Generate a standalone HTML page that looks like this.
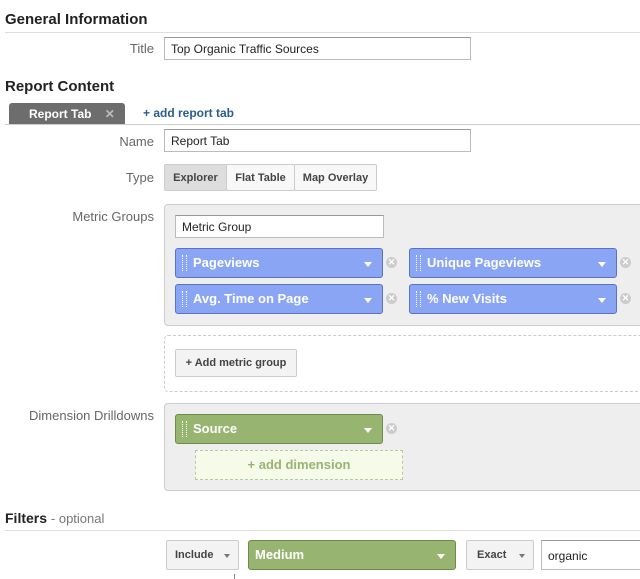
<!DOCTYPE html><html><head><style>
body{margin:0;width:640px;height:579px;overflow:hidden;background:#fff;font-family:"Liberation Sans",sans-serif;position:relative}
.a{position:absolute;box-sizing:border-box}
.h{font-weight:bold;font-size:15px;color:#222}
.lbl{font-size:13px;color:#666;text-align:right;width:150px;left:4px}
.inp{border:1px solid #bbb;background:#fff;font-size:12px;color:#222;padding:4px 6px;border-top-color:#999}
.pill{background:#8aa5f4;border:1px solid #5b73c4;border-radius:3px;color:#fff;font-weight:bold;font-size:13px;padding:6px 0 0 17px}
.pill.g{background:#98b471;border-color:#6f8a4d}
.pill:before{content:"";position:absolute;left:6px;top:6px;width:3px;height:16px;border-left:1px dotted #fff;border-right:1px dotted #fff}
.pill.nd:before{display:none}
.pill:after{content:"";position:absolute;right:10px;top:13px;border:4px solid transparent;border-top:5px solid #fff;border-bottom:0}
.x{width:11px;height:11px;border-radius:50%;background:#ccc;color:#fff;font-size:9px;line-height:11px;text-align:center;font-weight:bold}
.btn{border:1px solid #ccc;background:#f3f3f3;font-size:11px;font-weight:bold;color:#444;text-align:center;border-radius:2px}
.dd:after{content:"";position:absolute;right:8px;top:13px;border:3.5px solid transparent;border-top:4px solid #777;border-bottom:0}
</style></head><body>
<div class="a h" style="left:5px;top:11px">General Information</div>
<div class="a" style="left:5px;top:32px;width:635px;height:1px;background:#ddd"></div>
<div class="a lbl" style="top:41px">Title</div>
<div class="a inp" style="left:164px;top:37px;width:307px;height:23px">Top Organic Traffic Sources</div>
<div class="a h" style="left:5px;top:78px">Report Content</div>
<div class="a" style="left:9px;top:103px;width:116px;height:21px;background:#6d6d6d;border-radius:3px 3px 0 0;color:#fff;font-size:12px;font-weight:bold;padding:4px 0 0 20px">Report Tab <span style="color:#bbb;margin-left:10px">✕</span></div>
<div class="a" style="left:143px;top:106px;font-size:12px;font-weight:bold;color:#2a5d8c">+ add report tab</div>
<div class="a" style="left:5px;top:124px;width:635px;height:1px;background:#ccc"></div>
<div class="a lbl" style="top:134px">Name</div>
<div class="a inp" style="left:164px;top:129px;width:307px;height:23px">Report Tab</div>
<div class="a lbl" style="top:170px">Type</div>
<div class="a btn" style="left:164px;top:164px;width:63px;height:27px;line-height:27px;background:#ddd">Explorer</div>
<div class="a btn" style="left:226px;top:164px;width:69px;height:27px;line-height:27px;background:#f8f8f8">Flat Table</div>
<div class="a btn" style="left:294px;top:164px;width:83px;height:27px;line-height:27px;background:#f8f8f8">Map Overlay</div>
<div class="a lbl" style="top:209px">Metric Groups</div>
<div class="a" style="left:164px;top:204px;width:480px;height:122px;background:#eee;border:1px solid #ccc;border-radius:4px"></div>
<div class="a inp" style="left:175px;top:215px;width:209px;height:23px">Metric Group</div>
<div class="a pill" style="left:175px;top:248px;width:208px;height:30px">Pageviews</div>
<div class="a x" style="left:386px;top:257px">✕</div>
<div class="a pill" style="left:409px;top:248px;width:208px;height:30px">Unique Pageviews</div>
<div class="a x" style="left:620px;top:257px">✕</div>
<div class="a pill" style="left:175px;top:284px;width:208px;height:30px">Avg. Time on Page</div>
<div class="a x" style="left:386px;top:293px">✕</div>
<div class="a pill" style="left:409px;top:284px;width:208px;height:30px">% New Visits</div>
<div class="a x" style="left:620px;top:293px">✕</div>
<div class="a" style="left:164px;top:335px;width:480px;height:57px;border:1px dashed #ccc;border-radius:4px"></div>
<div class="a btn" style="left:175px;top:349px;width:122px;height:28px;line-height:27px">+ Add metric group</div>
<div class="a lbl" style="top:408px">Dimension Drilldowns</div>
<div class="a" style="left:164px;top:403px;width:480px;height:88px;background:#eee;border:1px solid #ccc;border-radius:4px"></div>
<div class="a pill g" style="left:175px;top:414px;width:208px;height:30px">Source</div>
<div class="a x" style="left:386px;top:423px">✕</div>
<div class="a" style="left:195px;top:450px;width:208px;height:30px;border:1px dashed #b7c99a;background:#f5fbe8;color:#98b471;font-weight:bold;font-size:13px;text-align:center;line-height:28px">+ add dimension</div>
<div class="a" style="left:5px;top:510px;font-size:14px;color:#222"><b>Filters</b> <span style="color:#777;font-size:13px">- optional</span></div>
<div class="a" style="left:5px;top:530px;width:635px;height:1px;background:#ddd"></div>
<div class="a btn dd" style="left:166px;top:540px;width:73px;height:30px;line-height:29px;text-align:left;padding-left:8px">Include</div>
<div class="a pill g nd" style="left:248px;top:540px;width:208px;height:30px;padding-left:6px">Medium</div>
<div class="a btn dd" style="left:466px;top:540px;width:68px;height:30px;line-height:29px;text-align:left;padding-left:10px">Exact</div>
<div class="a inp" style="left:541px;top:540px;width:110px;height:30px;padding-top:8px">organic</div>
<div class="a" style="left:234px;top:574px;width:1px;height:5px;background:#888"></div>
</body></html>
